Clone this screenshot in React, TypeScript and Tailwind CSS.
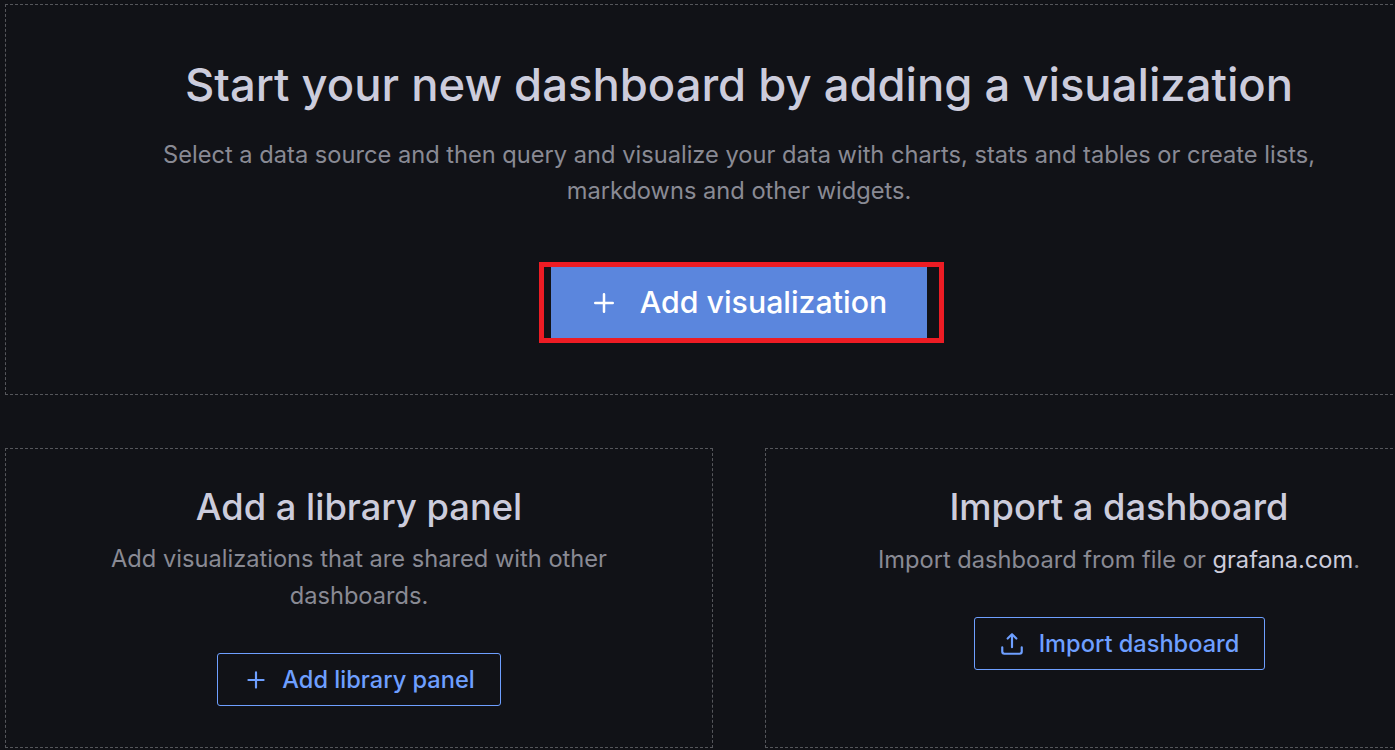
import React from 'react';

const PlusIcon = ({ size }: { size: number }) => (
  <svg width={size} height={size} viewBox="0 0 24 24" fill="currentColor" className="shrink-0">
    <path d="M19 11h-6V5a1 1 0 0 0-2 0v6H5a1 1 0 0 0 0 2h6v6a1 1 0 0 0 2 0v-6h6a1 1 0 0 0 0-2z" />
  </svg>
);

const UploadIcon = ({ size }: { size: number }) => (
  <svg width={size} height={size} viewBox="0 0 24 24" fill="currentColor" className="shrink-0">
    <path d="M8.71 7.71 11 5.41V15a1 1 0 0 0 2 0V5.41l2.29 2.3a1 1 0 0 0 1.42 0 1 1 0 0 0 0-1.42l-4-4a1 1 0 0 0-.33-.21 1 1 0 0 0-.76 0 1 1 0 0 0-.33.21l-4 4a1 1 0 1 0 1.42 1.42zM21 14a1 1 0 0 0-1 1v4a1 1 0 0 1-1 1H5a1 1 0 0 1-1-1v-4a1 1 0 0 0-2 0v4a3 3 0 0 0 3 3h14a3 3 0 0 0 3-3v-4a1 1 0 0 0-1-1z" />
  </svg>
);

export default function App() {
  return (
    <div className="h-[750px] w-full overflow-hidden bg-[#111217] pl-[5px] pt-[4px] font-['Inter',sans-serif]">
      <div className="flex w-[1468px] flex-col gap-[53px]">
        {/* Add visualization */}
        <div className="flex h-[391px] flex-col items-center border border-dashed border-[#55565b] pt-[51px]">
          <h1 className="text-[45.4px] leading-[58px] font-medium text-[#ccccdc]">
            Start your new dashboard by adding a visualization
          </h1>
          <p className="mt-[23px] w-[1180px] text-center text-[23.65px] leading-[36px] text-[#898a94]">
            Select a data source and then query and visualize your data with charts, stats and tables or create lists,
            markdowns and other widgets.
          </p>
          <div className="ml-[5px] mt-[53px] flex h-[81px] w-[405px] border-[5px] border-[#ed1c24] pl-[7px] pr-[12px]">
            <button className="flex flex-1 items-center justify-center gap-[21px] bg-[#5b86dd] pr-[2px] text-[30.3px] font-medium text-white">
              <PlusIcon size={30} />
              Add visualization
            </button>
          </div>
        </div>

        <div className="grid grid-cols-[708px_708px] gap-[52px]">
          {/* Library panel */}
          <div className="flex h-[300px] flex-col items-center border border-dashed border-[#55565b] pt-[35px]">
            <h2 className="text-[36.3px] leading-[46px] font-medium text-[#ccccdc]">Add a library panel</h2>
            <p className="mt-[11px] w-[560px] text-center text-[23.65px] leading-[36.5px] text-[#898a94]">
              Add visualizations that are shared with other dashboards.
            </p>
            <button className="mt-[39px] flex h-[53px] w-[284px] items-center justify-center gap-[13px] rounded-[3px] border border-[#6e9fff] text-[23.6px] font-medium text-[#6e9fff]">
              <PlusIcon size={26} />
              Add library panel
            </button>
          </div>

          {/* Import */}
          <div className="flex h-[300px] flex-col items-center border border-dashed border-[#55565b] pt-[35px]">
            <h2 className="text-[36.3px] leading-[46px] font-medium text-[#ccccdc]">Import a dashboard</h2>
            <p className="mt-[11px] text-center text-[23.65px] leading-[37px] text-[#898a94]">
              Import dashboard from file or <span className="text-[#ccccdc]">grafana.com</span>.
            </p>
            <button className="mt-[39px] flex h-[53px] w-[291px] items-center justify-center gap-[14px] rounded-[3px] border border-[#6e9fff] text-[23.6px] font-medium text-[#6e9fff]">
              <UploadIcon size={26} />
              Import dashboard
            </button>
          </div>
        </div>
      </div>
    </div>
  );
}
